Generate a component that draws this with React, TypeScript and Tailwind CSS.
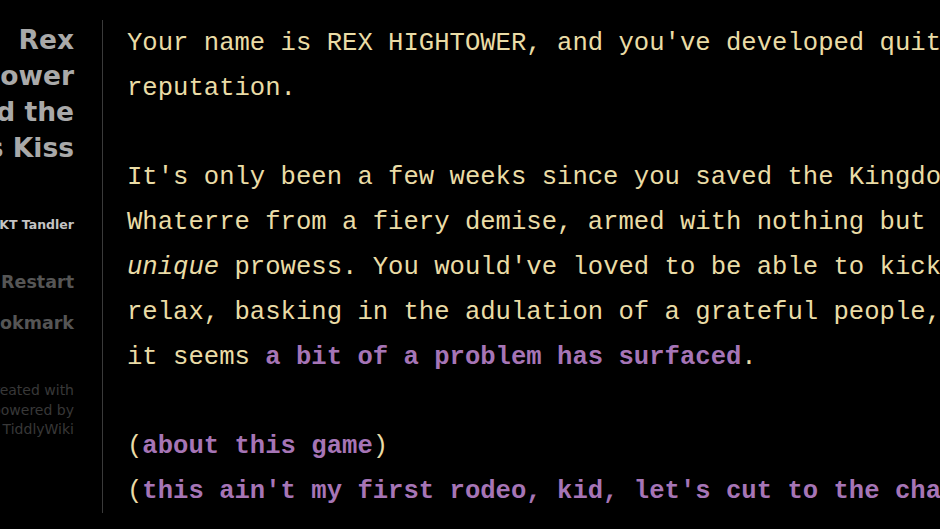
import React from "react";

const sans = { fontFamily: '"DejaVu Sans", Verdana, sans-serif' };

export default function App() {
  return (
    <div className="w-[940px] h-[529px] bg-black overflow-hidden flex pt-[20px]">
      <div
        className="w-[74px] shrink-0 mt-[2px] flex flex-col items-end whitespace-nowrap"
        style={sans}
      >
        <div className="flex flex-col items-end text-[26.5px] leading-[36px] font-bold text-[#a9a9a9]">
          <div>Rex</div>
          <div>Hightower</div>
          <div>and the</div>
          <div>Witch's Kiss</div>
        </div>
        <div className="mt-[50px] text-[12.5px] leading-[18px] font-bold text-[#c4c4c4]">
          by KT Tandler
        </div>
        <div className="mt-[35px] text-[17.5px] leading-[26px] font-bold text-[#555555]">
          Restart
        </div>
        <div className="mt-[15px] text-[17.5px] leading-[26px] font-bold text-[#555555]">
          Bookmark
        </div>
        <div className="mt-[45px] flex flex-col items-end text-[14px] leading-[19.5px] text-[#383838]">
          <div>This story was created with</div>
          <div>Twine and is powered by</div>
          <div>TiddlyWiki</div>
        </div>
      </div>
      <div
        className="ml-[28px] h-[493px] border-l border-[#3a3a3a] pl-[24px] pt-[2px] text-[25.6px] leading-[44.8px] text-[#eadca6] whitespace-nowrap"
        style={{ fontFamily: '"Liberation Mono", "Courier New", monospace' }}
      >
        <div>Your name is REX HIGHTOWER, and you've developed quite a</div>
        <div>reputation.</div>
        <div>&nbsp;</div>
        <div>It's only been a few weeks since you saved the Kingdom of</div>
        <div>Whaterre from a fiery demise, armed with nothing but your</div>
        <div>
          <i>unique</i> prowess. You would've loved to be able to kick back
        </div>
        <div>relax, basking in the adulation of a grateful people, but</div>
        <div>
          it seems{" "}
          <span className="font-bold text-[#a675b6]">
            a bit of a problem has surfaced
          </span>
          .
        </div>
        <div>&nbsp;</div>
        <div>
          (<span className="font-bold text-[#a675b6]">about this game</span>)
        </div>
        <div>
          (
          <span className="font-bold text-[#a675b6]">
            this ain't my first rodeo, kid, let's cut to the chase
          </span>
          )
        </div>
      </div>
    </div>
  );
}
